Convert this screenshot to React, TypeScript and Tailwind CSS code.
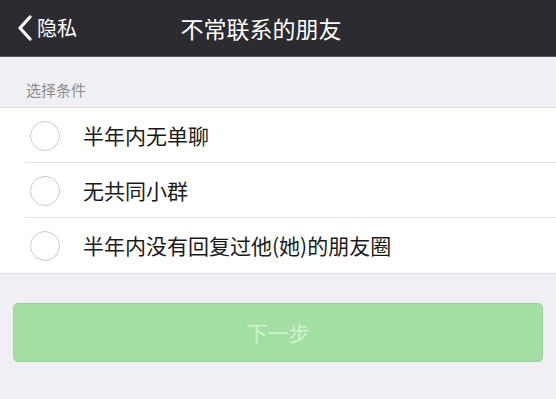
const options = ["半年内无单聊", "无共同小群", "半年内没有回复过他(她)的朋友圈"];

export default function App() {
  return (
    <div
      className="w-[556px] h-[399px] overflow-hidden bg-[#efeff4] flex flex-col"
      style={{ fontFamily: '"Noto Sans CJK SC", "Noto Sans", sans-serif' }}
    >
      {/* nav bar */}
      <div className="h-[57px] bg-[#2c2b31] relative flex items-center border-b border-[#5b5a60]">
        <div className="flex items-center pl-[17px] text-white z-10">
          <svg width="16" height="26" viewBox="0 0 16 26" fill="none">
            <polyline points="13,2 3,13 13,24" stroke="white" strokeWidth="3.2" strokeLinecap="round" strokeLinejoin="round" />
          </svg>
          <span className="text-[20px] ml-[4px]">隐私</span>
        </div>
        <div className="absolute inset-0 flex items-center justify-center pr-[34px] text-white text-[23px]">
          不常联系的朋友
        </div>
      </div>

      {/* section label */}
      <div className="h-[50px] flex items-end pb-[6px] pl-[26px] text-[15px] text-[#8a8a8f]">选择条件</div>

      {/* options */}
      <div className="bg-white border-t border-b border-[#dcdce0]">
        {options.map((o, i) => (
          <div key={o} className="h-[55px] flex items-center relative">
            <div className="ml-[30px] w-[30px] h-[30px] rounded-full border border-[#cbcbcf]" />
            <span className="ml-[23px] text-[21px] text-[#1a1a1a]">{o}</span>
            {i < options.length - 1 && (
              <div className="absolute bottom-0 left-[25px] right-0 h-px bg-[#e2e2e6]" />
            )}
          </div>
        ))}
      </div>

      {/* next button */}
      <div className="px-[13px] pt-[29px]">
        <button className="w-full h-[59px] rounded-[5px] bg-[#a3dea3] border border-[#98d298] text-[#d2f2d2] text-[21px]">
          下一步
        </button>
      </div>
    </div>
  );
}
